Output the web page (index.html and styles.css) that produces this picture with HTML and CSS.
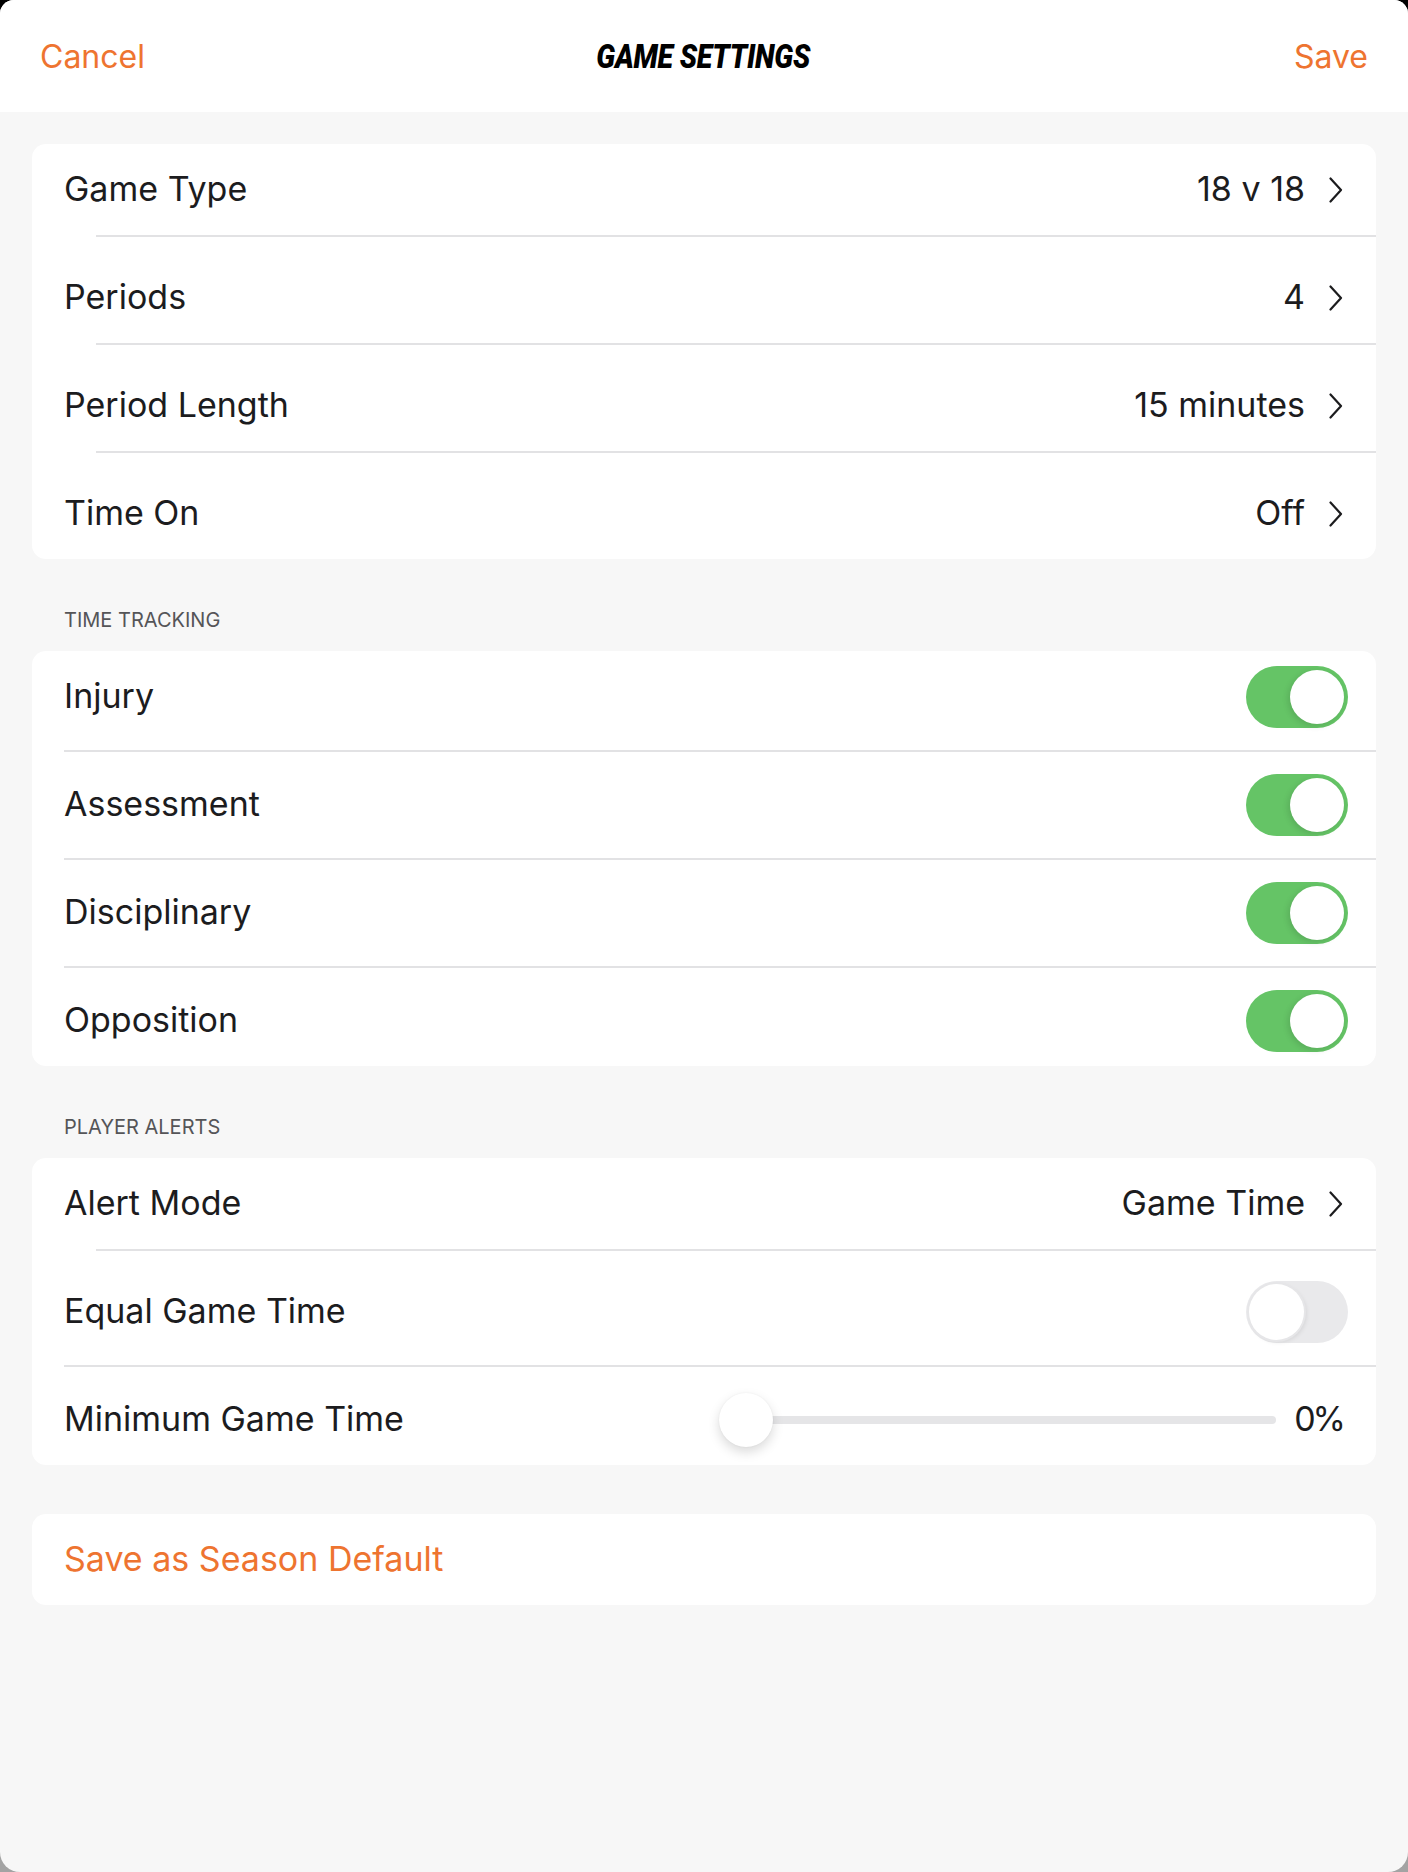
FILE: index.html
```html
<!DOCTYPE html>
<html>
<head>
<meta charset="utf-8">
<link rel="stylesheet" href="styles.css">
</head>
<body>
<div class="screen">
  <header class="nav">
    <span class="nav-btn">Cancel</span>
    <span class="nav-title">GAME SETTINGS</span>
    <span class="nav-btn">Save</span>
  </header>
  <main class="content">
    <section class="card">
      <div class="row">
        <span class="label">Game Type</span>
        <span class="value">18 v 18</span>
        <svg class="chev" width="14" height="26" viewBox="0 0 14 26"><path d="M1.5 1.5 L12 13 L1.5 24.5" fill="none" stroke="#1c1c1e" stroke-width="2.2" stroke-linecap="round" stroke-linejoin="round"/></svg>
      </div>
      <div class="sep sep-a"></div>
      <div class="row">
        <span class="label">Periods</span>
        <span class="value">4</span>
        <svg class="chev" width="14" height="26" viewBox="0 0 14 26"><path d="M1.5 1.5 L12 13 L1.5 24.5" fill="none" stroke="#1c1c1e" stroke-width="2.2" stroke-linecap="round" stroke-linejoin="round"/></svg>
      </div>
      <div class="sep sep-a"></div>
      <div class="row">
        <span class="label">Period Length</span>
        <span class="value">15 minutes</span>
        <svg class="chev" width="14" height="26" viewBox="0 0 14 26"><path d="M1.5 1.5 L12 13 L1.5 24.5" fill="none" stroke="#1c1c1e" stroke-width="2.2" stroke-linecap="round" stroke-linejoin="round"/></svg>
      </div>
      <div class="sep sep-a"></div>
      <div class="row">
        <span class="label">Time On</span>
        <span class="value">Off</span>
        <svg class="chev" width="14" height="26" viewBox="0 0 14 26"><path d="M1.5 1.5 L12 13 L1.5 24.5" fill="none" stroke="#1c1c1e" stroke-width="2.2" stroke-linecap="round" stroke-linejoin="round"/></svg>
      </div>
    </section>

    <h2 class="section-title">TIME TRACKING</h2>
    <section class="card">
      <div class="row row-toggle">
        <span class="label">Injury</span>
        <span class="toggle on"><span class="thumb"></span></span>
      </div>
      <div class="sep sep-b"></div>
      <div class="row row-toggle">
        <span class="label">Assessment</span>
        <span class="toggle on"><span class="thumb"></span></span>
      </div>
      <div class="sep sep-b"></div>
      <div class="row row-toggle">
        <span class="label">Disciplinary</span>
        <span class="toggle on"><span class="thumb"></span></span>
      </div>
      <div class="sep sep-b"></div>
      <div class="row row-toggle">
        <span class="label">Opposition</span>
        <span class="toggle on"><span class="thumb"></span></span>
      </div>
    </section>

    <h2 class="section-title">PLAYER ALERTS</h2>
    <section class="card">
      <div class="row">
        <span class="label">Alert Mode</span>
        <span class="value">Game Time</span>
        <svg class="chev" width="14" height="26" viewBox="0 0 14 26"><path d="M1.5 1.5 L12 13 L1.5 24.5" fill="none" stroke="#1c1c1e" stroke-width="2.2" stroke-linecap="round" stroke-linejoin="round"/></svg>
      </div>
      <div class="sep sep-a"></div>
      <div class="row row-toggle">
        <span class="label">Equal Game Time</span>
        <span class="toggle off"><span class="thumb"></span></span>
      </div>
      <div class="sep sep-b"></div>
      <div class="row row-slider">
        <span class="label">Minimum Game Time</span>
        <span class="slider"><span class="track"></span><span class="knob"></span></span>
        <span class="pct">0%</span>
      </div>
    </section>

    <section class="card card-action">
      <div class="row">
        <span class="action">Save as Season Default</span>
      </div>
    </section>
  </main>
</div>
</body>
</html>
```

FILE: styles.css
```css
html, body {
  margin: 0;
  padding: 0;
}
body {
  background: linear-gradient(#000 0, #000 50%, #a3a3a3 50%, #a3a3a3 100%);
  font-family: Inter, "Noto Sans", sans-serif;
  color: #1c1c1e;
}
.screen {
  width: 1408px;
  height: 1872px;
  background: #f7f7f7;
  border-radius: 14px 14px 20px 20px;
  overflow: hidden;
}
.nav {
  height: 112px;
  background: #fff;
  display: flex;
  align-items: center;
  justify-content: space-between;
  padding: 0 40px 0 40px;
  box-sizing: border-box;
}
.nav-btn {
  font-size: 32px;
  color: #ee7430;
  width: 140px;
}
.nav-btn:last-child {
  text-align: right;
}
.nav-title {
  font-family: Roboto, sans-serif;
  font-weight: 900;
  font-style: italic;
  font-size: 34px;
  letter-spacing: -0.3px;
  transform: scaleX(0.84);
  color: #000;
  margin-left: -2px;
}
.content {
  padding: 32px 32px 0 32px;
}
.card {
  background: #fff;
  border-radius: 14px;
}
.card-action {
  margin-top: 49px;
}
.row {
  height: 91px;
  display: flex;
  align-items: center;
  padding: 0 33px 0 32px;
  font-size: 34px;
}
.row-toggle {
  padding-right: 28px;
}
.row-slider {
  padding-right: 33px;
}
.label {
  flex: 1;
  position: relative;
  top: -1px;
}
.value {
  margin-right: 24px;
  position: relative;
  top: -1px;
}
.chev {
  display: block;
}
.sep {
  height: 2px;
  background: #e2e2e4;
}
.sep-a {
  margin-left: 64px;
  margin-bottom: 15px;
}
.sep-b {
  margin: 8px 0 7px 32px;
}
.section-title {
  margin: 49px 0 19px 32px;
  font-size: 20px;
  line-height: 24px;
  font-weight: 400;
  color: #555558;
}
.toggle {
  position: relative;
  width: 102px;
  height: 62px;
  border-radius: 31px;
  display: block;
}
.toggle.on {
  background: #65c466;
}
.toggle.off {
  background: #e9e9eb;
}
.thumb {
  position: absolute;
  top: 4px;
  width: 54px;
  height: 54px;
  border-radius: 50%;
  background: #fff;
}
.toggle.on .thumb {
  right: 4px;
  box-shadow: -2px 2px 6px rgba(0, 0, 0, 0.12);
}
.toggle.off .thumb {
  left: 3px;
  top: 3px;
  width: 55px;
  height: 56px;
  box-shadow: 0 0 0 2px #e6e6e8, 2px 2px 5px rgba(0, 0, 0, 0.1);
}
.slider {
  position: relative;
  width: 557px;
  height: 54px;
  margin-right: 18px;
  display: block;
}
.track {
  position: absolute;
  left: 27px;
  right: 0;
  top: 23px;
  height: 8px;
  border-radius: 4px;
  background: #e5e5e7;
}
.knob {
  position: absolute;
  left: 0;
  top: 0;
  width: 54px;
  height: 54px;
  border-radius: 50%;
  background: #fff;
  box-shadow: 0 5px 12px rgba(0, 0, 0, 0.15), 0 0 2px rgba(0, 0, 0, 0.06);
}
.pct {
  position: relative;
  top: -1px;
  letter-spacing: -3px;
}
.action {
  color: #ee7430;
  position: relative;
  top: -1px;
}
```
